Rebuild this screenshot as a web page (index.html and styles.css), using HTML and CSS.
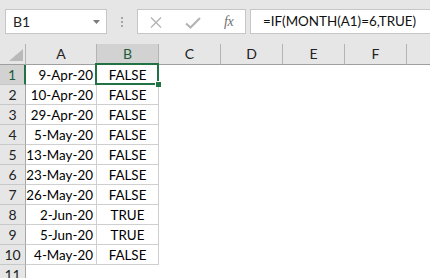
FILE: index.html
```html
<!DOCTYPE html>
<html>
<head>
<meta charset="utf-8">
<link rel="stylesheet" href="styles.css">
</head>
<body>
<div class="app">
  <div class="fbar">
    <div class="namebox">
      <span class="name">B1</span>
      <svg class="dd" width="7" height="4" viewBox="0 0 7 4"><path d="M0 0H7L3.5 4Z" fill="#7a7a7a"/></svg>
    </div>
    <div class="grip"><i></i><i></i><i></i></div>
    <div class="btns">
      <svg class="ico-x" width="12" height="11" viewBox="0 0 12 11"><path d="M1 0.5L11 10.5M11 0.5L1 10.5" stroke="#b4b4b4" stroke-width="1.4" fill="none"/></svg>
      <svg class="ico-ok" width="16" height="12" viewBox="0 0 16 12"><path d="M1 6.5L5.5 10.5L15 1" stroke="#b4b4b4" stroke-width="2.2" fill="none"/></svg>
      <span class="fx">fx</span>
    </div>
    <div class="formula">=IF(MONTH(A1)=6,TRUE)</div>
  </div>
  <div class="sheet">
    <div class="hd corner"><svg width="14" height="12" viewBox="0 0 14 12"><path d="M14 0V12H0Z" fill="#b9b9b9"/></svg></div>
    <div class="hd col">A</div>
    <div class="hd col active">B</div>
    <div class="hd col">C</div>
    <div class="hd col">D</div>
    <div class="hd col">E</div>
    <div class="hd col">F</div>
    <div class="hd col last"></div>

    <div class="rh active">1</div><div class="c a">9-Apr-20</div><div class="c b">FALSE</div><div class="e"></div>
    <div class="rh">2</div><div class="c a">10-Apr-20</div><div class="c b">FALSE</div><div class="e"></div>
    <div class="rh">3</div><div class="c a">29-Apr-20</div><div class="c b">FALSE</div><div class="e"></div>
    <div class="rh">4</div><div class="c a">5-May-20</div><div class="c b">FALSE</div><div class="e"></div>
    <div class="rh">5</div><div class="c a">13-May-20</div><div class="c b">FALSE</div><div class="e"></div>
    <div class="rh">6</div><div class="c a">23-May-20</div><div class="c b">FALSE</div><div class="e"></div>
    <div class="rh">7</div><div class="c a">26-May-20</div><div class="c b">FALSE</div><div class="e"></div>
    <div class="rh">8</div><div class="c a">2-Jun-20</div><div class="c b">TRUE</div><div class="e"></div>
    <div class="rh">9</div><div class="c a">5-Jun-20</div><div class="c b">TRUE</div><div class="e"></div>
    <div class="rh">10</div><div class="c a">4-May-20</div><div class="c b">FALSE</div><div class="e"></div>
    <div class="rh">11</div><div class="e e11"></div>

    <div class="sel"><span class="handle"></span></div>
  </div>
</div>
</body>
</html>
```
FILE: styles.css
```css
* { box-sizing: border-box; }
html, body { margin: 0; padding: 0; background: #fff; }
body { width: 430px; height: 278px; overflow: hidden; font-family: Lato, "Liberation Sans", sans-serif; color: #000; }
.app { display: flex; flex-direction: column; width: 430px; }

.fbar { height: 44px; background: #e6e6e6; display: flex; align-items: flex-start; padding: 9px 0 0 5px; }
.namebox { width: 102px; height: 25px; background: #fff; border: 1px solid #c6c6c6; display: flex; align-items: center; justify-content: space-between; padding: 0 6px 0 7px; }
.name { font-size: 14px; color: #222; }
.dd { margin-top: 1px; }
.grip { width: 30px; height: 25px; display: flex; flex-direction: column; align-items: center; justify-content: center; gap: 2px; }
.grip i { display: block; width: 2px; height: 2px; background: #a6a6a6; }
.btns { width: 109px; height: 25px; background: #fff; border: 1px solid #c6c6c6; display: flex; align-items: center; padding: 0 0 0 12px; }
.ico-x { margin-top: 1px; }
.ico-ok { margin-left: 23px; margin-top: 2px; }
.fx { margin-left: 23px; font-family: "Liberation Serif", serif; font-style: italic; font-size: 14px; color: #707070; letter-spacing: -0.5px; }
.formula { flex: 1; height: 25px; margin-left: 4px; background: #fff; border: 1px solid #c6c6c6; border-right: none; font-size: 13.4px; line-height: 23px; padding-left: 12px; color: #111; white-space: nowrap; }

.sheet { position: relative; display: grid; grid-template-columns: 26px 71px 62px 62px 62px 62px 62px 1fr; grid-template-rows: 21px repeat(11, 20px); }
.hd { background: #e6e6e6; border-bottom: 1px solid #9f9f9f; font-size: 14px; line-height: 20px; text-align: center; color: #222; }
.col { border-right: 1px solid #b4b4b4; }
.col.last { border-right: none; }
.col.active { background: #d2d2d2; border-bottom: 2px solid #217346; color: #1d5e3a; line-height: 19px; }
.corner { display: flex; align-items: flex-end; justify-content: flex-end; padding: 0 2px 3px 0; border-right: 1px solid #b4b4b4; }

.rh { background: #e6e6e6; border-right: 1px solid #a6a6a6; border-bottom: 1px solid #c8c8c8; font-size: 14px; line-height: 19px; text-align: center; color: #222; }
.rh.active { background: #d2d2d2; border-right: 2px solid #217346; color: #1d5e3a; }
.c { border-right: 1px solid #cfcfcf; border-bottom: 1px solid #cfcfcf; font-size: 13.4px; line-height: 20px; white-space: nowrap; }
.c.a { text-align: right; padding-right: 3px; }
.c.b { text-align: center; }
.e { grid-column: 4 / -1; }
.e11 { grid-column: 2 / -1; }

.sel { position: absolute; left: 95px; top: 19px; width: 64px; height: 22px; border: 2px solid #217346; }
.handle { position: absolute; right: -4px; bottom: -4px; width: 6px; height: 6px; background: #217346; border: 1px solid #fff; border-right: none; border-bottom: none; }
```
